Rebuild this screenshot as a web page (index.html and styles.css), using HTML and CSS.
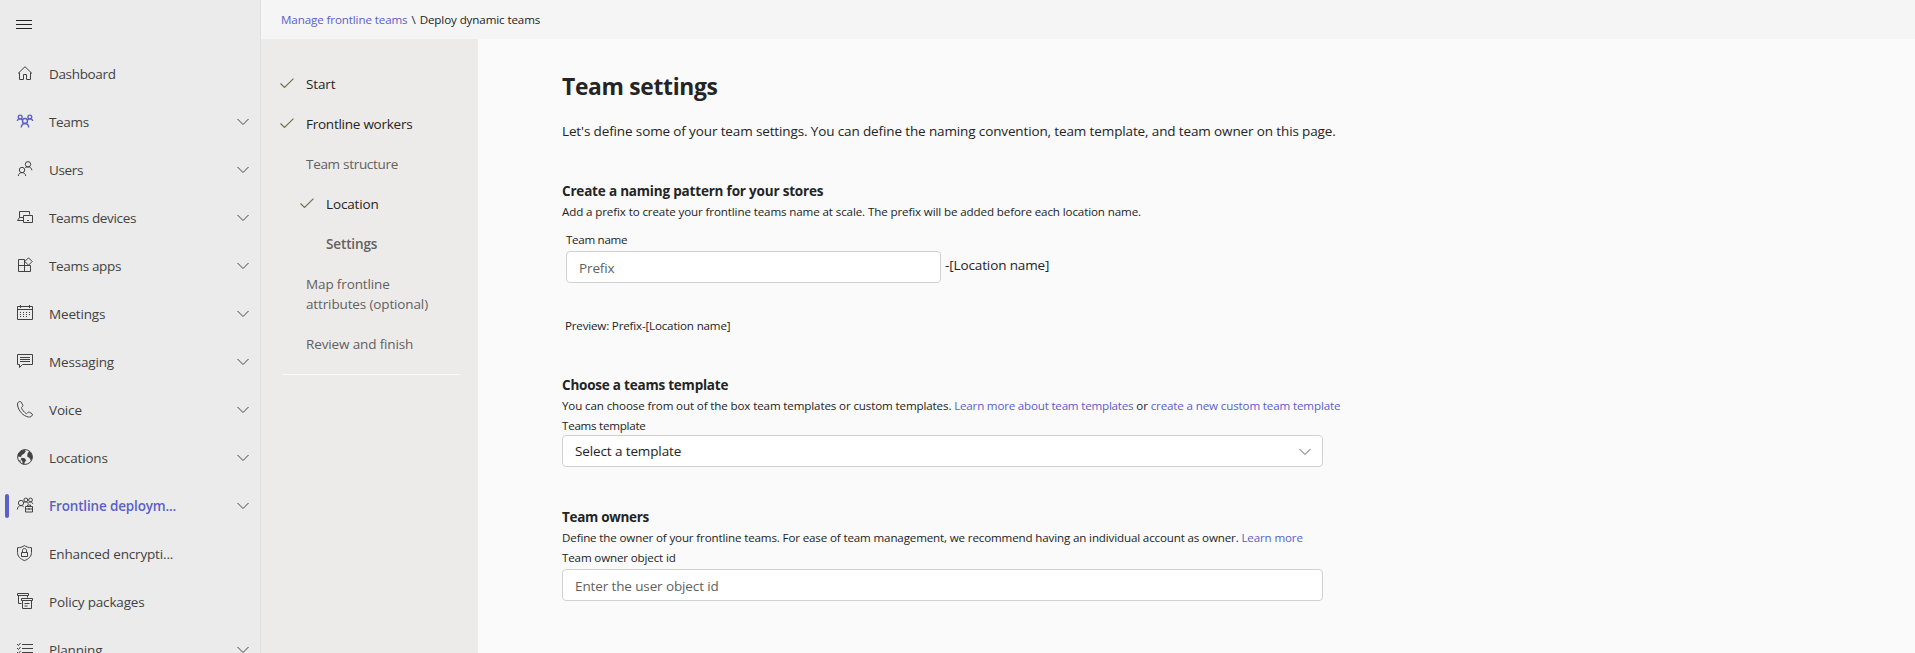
FILE: index.html
```
<!DOCTYPE html>
<html lang="en">
<head>
<meta charset="utf-8">
<title>Deploy dynamic teams</title>
<link rel="stylesheet" href="styles.css">
</head>
<body>
<svg class="defs" width="0" height="0">
  <symbol id="chev" viewBox="0 0 12 8"><path d="M.5 1 6 6.500 11.500 1"/></symbol>
  <symbol id="check" viewBox="0 0 14 11"><path d="M.5 5.500 4.500 9.500 13.500.700"/></symbol>
</svg>
<div class="app">
  <nav class="sidebar">
    <button class="burger" aria-label="Menu"><svg width="16" height="10" viewBox="0 0 16 10"><path d="M0 .5h16M0 4.500h16M0 8.500h16"/></svg></button>
    <a class="item"><svg class="icon" viewBox="0 0 18 18"><path d="M2 8.500 9 1.700l7 6.800M3.500 7.500v7h4v-5h3v5h4v-7"/></svg><span class="label tight">Dashboard</span></a>
    <a class="item"><svg class="icon violet" viewBox="0 0 18 18"><circle cx="4.200" cy="4" r="1.900"/><circle cx="13.800" cy="4" r="1.900"/><circle cx="9" cy="8" r="2.500"/><path d="M1.300 8c.2-1.500 1-2.100 2.900-2.100 1 0 1.800.5 2.300 1.100M16.700 8c-.2-1.500-1-2.100-2.900-2.100-1 0-1.800.5-2.300 1.100M5.200 14.500c.3-2.500 1.500-4 3.800-4s3.500 1.500 3.800 4"/></svg><span class="label mid">Teams</span><svg class="chev"><use href="#chev"/></svg></a>
    <a class="item"><svg class="icon" viewBox="0 0 18 18"><circle cx="12" cy="3.300" r="2.700"/><circle cx="6" cy="9" r="2.700"/><path d="M2.300 15c.2-2.200 1.500-3.400 3.700-3.400s3.500 1.200 3.700 3.400M9.200 6.600c.7-.5 1.600-.7 2.800-.7 2.300 0 3.600 1.200 3.900 3.400"/></svg><span class="label mid">Users</span><svg class="chev"><use href="#chev"/></svg></a>
    <a class="item"><svg class="icon" viewBox="0 0 18 18"><path d="M3.500 8.500v-6h10v3M7 11.500H1.500l2-3H7M7.500 6.500h9v7h-9zM11 11.500h2"/></svg><span class="label mid">Teams devices</span><svg class="chev"><use href="#chev"/></svg></a>
    <a class="item"><svg class="icon" viewBox="0 0 18 18"><path d="M8.500 2.500h-6v12h12v-6h-12M8.500 2.500v12M12.500.800l3.700 3.700-3.700 3.700-3.700-3.700z"/></svg><span class="label mid">Teams apps</span><svg class="chev"><use href="#chev"/></svg></a>
    <a class="item"><svg class="icon" viewBox="0 0 18 18"><path d="M1.500 1.500h15v13h-15zM1.500 4.500h15M4.500 0v3M13.500 0v3"/><path d="M4 7.500h11M4 9.500h11M4 11.500h9" stroke-dasharray="1 2"/></svg><span class="label">Meetings</span><svg class="chev"><use href="#chev"/></svg></a>
    <a class="item"><svg class="icon" viewBox="0 0 18 18"><path d="M1.500 1.500h15v10h-10l-3 3v-3h-2zM4 4.500h10M4 6.500h10M4 8.500h10"/></svg><span class="label">Messaging</span><svg class="chev"><use href="#chev"/></svg></a>
    <a class="item"><svg class="icon" viewBox="0 0 18 18"><path d="M3.500.6C2 1 1.300 2.500 1.500 4c.9 5.800 5.500 11 11 12 1.700.2 3.300-.6 3.900-2 .2-.5.100-.9-.3-1.200l-2.700-1.600c-.8-.4-1.400 0-2 .9-.5.600-1 .6-1.600.2C8 11 6.500 9.200 5.600 7.300c-.3-.6-.1-1 .4-1.400.9-.6 1-1.200.7-2L5.200 1.200C4.800.5 4.200.4 3.500.6z"/></svg><span class="label">Voice</span><svg class="chev"><use href="#chev"/></svg></a>
    <a class="item"><svg class="icon" viewBox="0 0 18 18"><circle cx="9" cy="8" r="7.400"/><path class="fill" d="M2 5 5 1.800 8.500.700l1.300 1.600L8 4.800 5.800 6 5 8 2 7.500zM5.500 8.700l3.200.6 1.500 1.900-1.500 2-.5 2.300-1.600-.3-.3-3-1.500-2zM11.500 4.500l1.700-2.400 2.600 3 .5 4-1.300 2.700-1.500-2.700-2.300-1.600zM3 11l1.700.6-.2 2z"/></svg><span class="label">Locations</span><svg class="chev"><use href="#chev"/></svg></a>
    <a class="item active"><svg class="icon" viewBox="0 0 18 18"><circle cx="5" cy="6" r="2.600"/><circle cx="9.800" cy="3" r="1.900"/><circle cx="14.500" cy="3" r="1.900"/><path d="M1.300 12.500c.2-2.500 1.600-3.900 3.700-3.900 1.200 0 2 .4 2.700 1.200M7.500 5.800c.6-.6 1.300-.9 2.300-.9s1.900.5 2.300 1.500c.5-1 1.300-1.500 2.400-1.500 1.200 0 2 .7 2.200 2M9.500 9.500h7v5.500h-7zM9.500 12h7M11.500 9.500V8h3v1.500M13 11v2"/></svg><span class="label">Frontline deploym...</span><svg class="chev"><use href="#chev"/></svg></a>
    <a class="item"><svg class="icon" viewBox="0 0 18 18"><path d="M8.500.6C6.500 2 4.200 2.700 1.500 2.700v4.800c0 3.500 2.300 6.300 7 8.100 4.700-1.800 7-4.600 7-8.100V2.700c-2.700 0-5-.7-7-2.100zM5.500 7.500h6v4h-6zM6.500 7.500V5.300c0-2.400 4-2.400 4 0v2.200"/></svg><span class="label">Enhanced encrypti...</span></a>
    <a class="item"><svg class="icon" viewBox="0 0 18 18"><path d="M1.500.5h11v2h-11zM2.500 2.500v8h3M11.500 2.500v2M5.500 5.500h11v2h-11zM6.500 7.500v8h9v-8M8.500 10.500h5M8.500 13h3"/></svg><span class="label">Policy packages</span></a>
    <a class="item"><svg class="icon" viewBox="0 0 18 18"><path d="M6 3.500h11M6 7.500h11M6 11.500h11M1 3l1.500 1.500 2-2.500M1 7l1.500 1.500 2-2.500M1 11l1.500 1.500 2-2.500"/></svg><span class="label">Planning</span><svg class="chev"><use href="#chev"/></svg></a>
  </nav>
  <div class="page">
    <header class="crumbs"><a class="link">Manage frontline teams</a><span class="sep">\</span><span>Deploy dynamic teams</span></header>
    <div class="body">
      <aside class="steps">
        <div class="step done"><svg class="check"><use href="#check"/></svg><span>Start</span></div>
        <div class="step done"><svg class="check"><use href="#check"/></svg><span class="workers">Frontline workers</span></div>
        <div class="step"><span class="structure">Team structure</span></div>
        <div class="step done sub"><svg class="check"><use href="#check"/></svg><span>Location</span></div>
        <div class="step sub current"><span>Settings</span></div>
        <div class="step"><span>Map frontline<br>attributes (optional)</span></div>
        <div class="step"><span>Review and finish</span></div>
        <div class="rule"></div>
      </aside>
      <main class="content">
        <h1>Team settings</h1>
        <p class="intro">Let's define some of your team settings. You can define the naming convention, team template, and team owner on this page.</p>
        <section class="naming">
          <h2>Create a naming pattern for your stores</h2>
          <p class="small">Add a prefix to create your frontline teams name at scale. The prefix will be added before each location name.</p>
          <div class="name-field">
            <label class="small label-name">Team name</label>
            <div class="name-row"><input class="field" placeholder="Prefix"><span class="suffix">-[Location name]</span></div>
          </div>
          <p class="small preview">Preview: Prefix-[Location name]</p>
        </section>
        <section class="template">
          <h2 class="h-template">Choose a teams template</h2>
          <p class="small choose">You can choose from out of the box team templates or custom templates. <a class="link about">Learn more about team templates</a> or <a class="link create">create a new custom team template</a></p>
          <label class="small label-template">Teams template</label>
          <div class="field select"><span>Select a template</span><svg class="chev"><use href="#chev"/></svg></div>
        </section>
        <section class="owners">
          <h2 class="h-owners">Team owners</h2>
          <p class="small define">Define the owner of your frontline teams. For ease of team management, we recommend having an individual account as owner. <a class="link">Learn more</a></p>
          <label class="small label-owner">Team owner object id</label>
          <input class="field owner" placeholder="Enter the user object id">
        </section>
      </main>
    </div>
  </div>
</div>
</body>
</html>
```
FILE: styles.css
```
* { box-sizing: border-box; }
body {
  margin: 0;
  height: 653px;
  overflow: hidden;
  background: #fafafa;
  color: #242424;
  font: 13.5px/20px "Open Sans", sans-serif;
  letter-spacing: -0.134px;
}
h1, h2, p { margin: 0; }
svg { fill: none; stroke: currentColor; }
.defs { position: absolute; }
.link { color: #5b5fc7; }
.app { display: flex; height: 653px; }

.sidebar {
  width: 261px;
  flex: none;
  overflow: hidden;
  background: #ebebeb;
  border-right: 1px solid #dedede;
  color: #424242;
  letter-spacing: -0.16px;
}
.burger {
  display: block;
  height: 50px;
  padding: 20px 16px;
  border: 0;
  background: none;
  color: #242424;
}
.burger svg { display: block; }
.item {
  display: flex;
  align-items: center;
  height: 48px;
  padding: 0 11px 0 16px;
}
.icon { width: 18px; height: 18px; margin-right: 15px; flex: none; }
.icon .fill { fill: currentColor; stroke: none; }
.violet { color: #5b5fc7; stroke-width: 1.4; }
.label { flex: 1; white-space: nowrap; }
.tight { letter-spacing: -0.34px; }
.mid { letter-spacing: -0.34px; }
.chev { width: 12px; height: 8px; flex: none; margin-top: -1px; }
.active { padding-left: 5px; }
.active::before {
  content: "";
  width: 4px;
  height: 24px;
  margin: -1px 7px 0 0;
  border-radius: 2px;
  background: #5b5fc7;
}
.active .label { color: #5b5fc7; font-weight: 600; }

.page { flex: 1; display: flex; flex-direction: column; }
.crumbs {
  height: 39px;
  padding: 10px 20px;
  background: #f5f5f5;
  font-size: 11.6px;
  letter-spacing: -0.11px;
}
.sep { margin: 0 4px; }
.body { flex: 1; display: flex; }
.steps {
  width: 217px;
  padding: 35px 18px 0 19px;
  background: #edebe9;
  color: #616161;
}
.step { display: flex; padding: 0 0 20px 26px; }
.step.sub { padding-left: 46px; }
.step.done { color: #242424; }
.step .check { margin: 4px 12px 0 -26px; }
.check { width: 14px; height: 11px; flex: none; color: #66734f; stroke-width: 1.15; }
.workers { letter-spacing: -0.25px; }
.structure { letter-spacing: -0.3px; }
.current { font-weight: 600; }
.rule { height: 1px; margin: 0 0 0 3px; background: #faf9f8; }

.content { padding: 32px 0 0 84px; }
h1 { font-size: 22.8px; line-height: 32px; font-weight: 700; letter-spacing: -0.3px; }
h2 { font-size: 13.5px; line-height: 20px; font-weight: 700; letter-spacing: -0.19px; }
.h-template { letter-spacing: -0.22px; }
.h-owners { letter-spacing: -0.3px; }
.intro { margin-top: 18px; letter-spacing: -0.128px; }
.small {
  display: block;
  padding-top: 1px;
  margin-bottom: -1px;
  font-size: 11.6px;
  letter-spacing: -0.12px;
}
.naming { margin-top: 40px; }
.name-field { padding: 8px 0 0 4px; }
.label-name { margin-bottom: 1px; letter-spacing: -0.3px; }
.name-row { display: flex; gap: 4px; }
.name-row .field { width: 375px; }
.suffix { margin-top: 4px; letter-spacing: -0.12px; }
.preview { margin: 32px 0 -1px 3px; letter-spacing: -0.18px; }
.template, .owners { margin-top: 40px; }
.choose { letter-spacing: -0.13px; }
.about { letter-spacing: -0.2px; }
.create { letter-spacing: -0.14px; }
.label-template { letter-spacing: -0.25px; }
.label-owner { margin-bottom: 1px; letter-spacing: -0.15px; }
.define { letter-spacing: -0.147px; }
.field {
  display: block;
  width: 761px;
  height: 32px;
  padding: 2px 12px 0;
  border: 1px solid #d1d1d1;
  border-radius: 4px;
  background: #fff;
  color: #242424;
  font: inherit;
  letter-spacing: -0.12px;
}
.field::placeholder { color: #616161; opacity: 1; }
.select { display: flex; align-items: center; justify-content: space-between; padding: 0 11px 0 12px; }
.select .chev { color: #616161; margin-top: 2px; }
```
